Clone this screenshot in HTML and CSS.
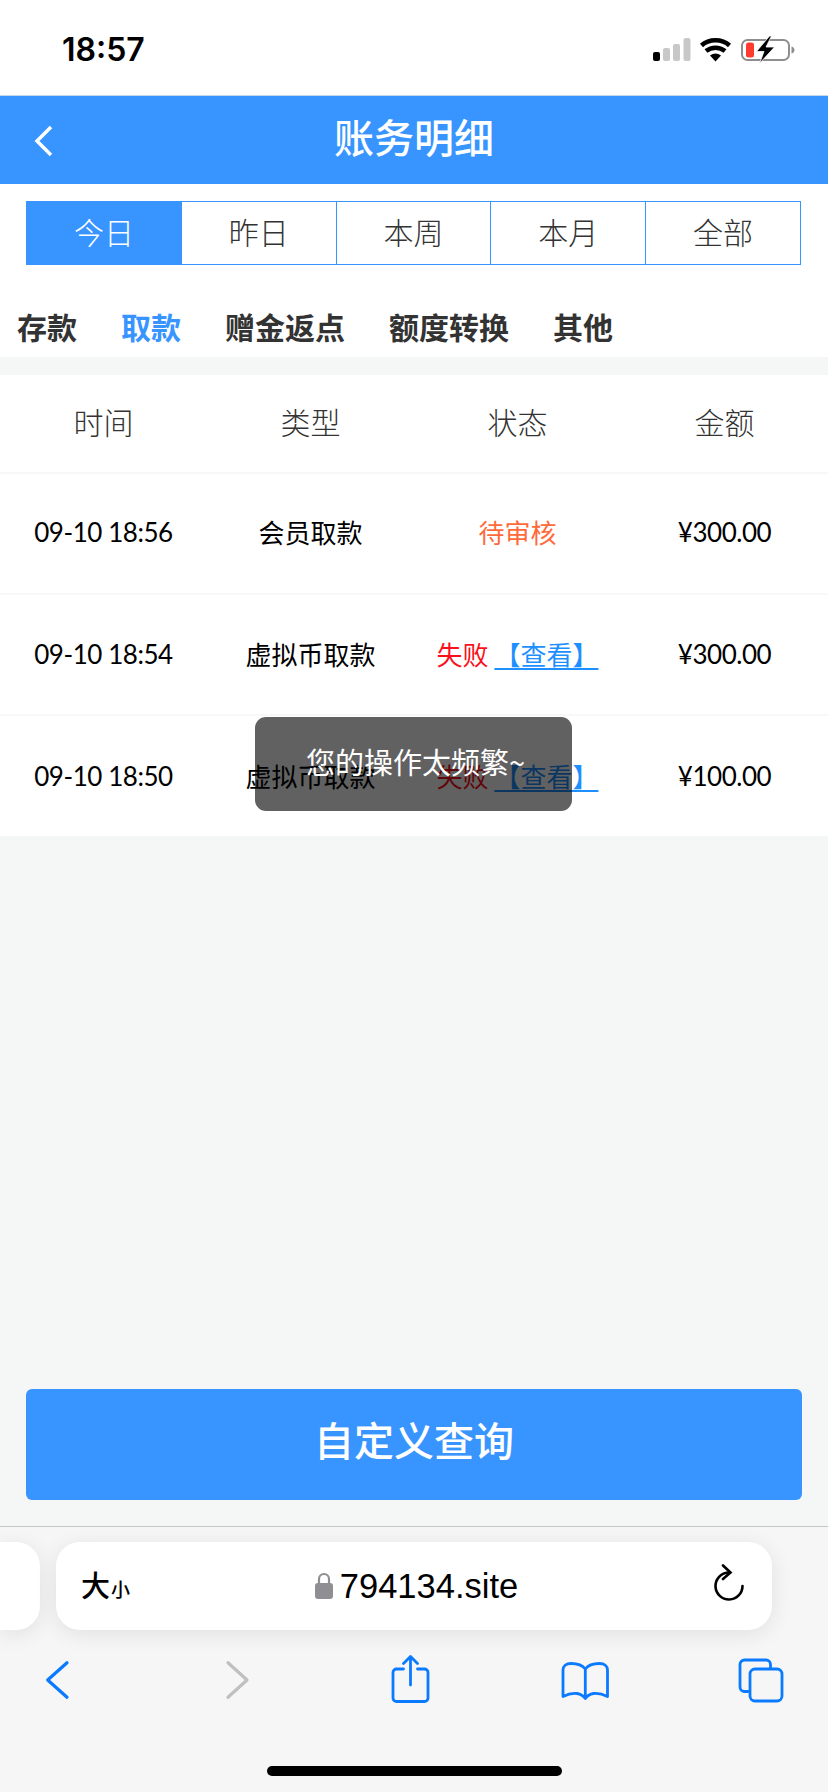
FILE: index.html
```html
<!DOCTYPE html>
<html lang="zh">
<head>
<meta charset="utf-8">
<title>账务明细</title>
<link rel="stylesheet" href="styles.css">
</head>
<body>
<div class="page">
  <div class="status">
    <span class="clock">18:57</span>
    <svg class="status-icons" width="142" height="28" viewBox="0 0 142 28">
      <rect x="0" y="16" width="7" height="9" rx="2" fill="#000"/>
      <rect x="10" y="12" width="7" height="13" rx="2" fill="#c8c8c8"/>
      <rect x="20" y="8" width="7" height="17" rx="2" fill="#c8c8c8"/>
      <rect x="30.500" y="2" width="7" height="23" rx="2" fill="#c8c8c8"/>
      <path d="M48.500 9.500C56 2.500 69 2.500 76.500 9.500M53 15C58.500 10.500 66.500 10.500 72 15" fill="none" stroke="#000" stroke-width="4.500"/>
      <path d="M57 19.500C60.500 16.800 64.500 16.800 68 19.500L62.500 25.500Z" fill="#000"/>
      <rect x="89" y="4" width="47" height="20" rx="5.500" fill="none" stroke="#8e8e8e" stroke-width="2"/>
      <path d="M138.500 10.500c2 .6 3 2 3 3.500s-1 3-3 3.500z" fill="#8e8e8e"/>
      <rect x="93" y="6.500" width="8" height="15" rx="2.500" fill="#ff3b30"/>
      <path d="M116.500 0 103.500 15.500h7.500l-4.500 12 15-16.500h-8.500l5.500-11z" fill="#000" stroke="#fff" stroke-width=".8"/>
    </svg>
  </div>

  <header class="topbar">
    <svg class="topbar-back" width="22" height="34" viewBox="0 0 22 34"><path d="M18 3 4 17l14 14" fill="none" stroke="#fff" stroke-width="3.500"/></svg>
    <h1 class="topbar-title">账务明细</h1>
  </header>

  <section class="filters">
    <div class="periods">
      <div class="period period-on">今日</div>
      <div class="period">昨日</div>
      <div class="period">本周</div>
      <div class="period">本月</div>
      <div class="period">全部</div>
    </div>
    <nav class="kinds">
      <span>存款</span>
      <span class="kind-on">取款</span>
      <span>赠金返点</span>
      <span>额度转换</span>
      <span>其他</span>
    </nav>
  </section>

  <section class="ledger">
    <div class="row row-head">
      <div>时间</div><div>类型</div><div>状态</div><div>金额</div>
    </div>
    <div class="row row-first">
      <div class="num">09-10 18:56</div><div>会员取款</div><div class="pending">待审核</div><div class="num">¥300.00</div>
    </div>
    <div class="row row-second">
      <div class="num">09-10 18:54</div><div>虚拟币取款</div><div><span class="failed">失败</span> <a class="view">【查看】</a></div><div class="num">¥300.00</div>
    </div>
    <div class="row row-last">
      <div class="num">09-10 18:50</div><div>虚拟币取款</div><div><span class="failed">失败</span> <a class="view">【查看】</a></div><div class="num">¥100.00</div>
    </div>
  </section>

  <div class="spacer"></div>
  <button class="query">自定义查询</button>

  <div class="browser">
    <div class="url-row">
      <div class="url-stub"></div>
      <div class="url-bar">
        <div class="aa"><span class="aa-big">大</span><span class="aa-small">小</span></div>
        <div class="url">
          <svg class="lock" width="18" height="27" viewBox="0 0 18 27"><path d="M4 12V7a5 5 0 0 1 10 0v5" fill="none" stroke="#8e8e93" stroke-width="2.200"/><rect x="0" y="11" width="18" height="16" rx="3" fill="#8e8e93"/></svg>
          <span>794134.site</span>
        </div>
        <svg class="reload" width="32" height="38" viewBox="0 0 32 38"><path d="M15 8.500A13.500 13.500 0 1 0 29.500 22" fill="none" stroke="#000" stroke-width="2.600" stroke-linecap="round"/><path d="M10 1.500 17.500 8.500 10 15" fill="none" stroke="#000" stroke-width="2.600" stroke-linecap="round"/></svg>
      </div>
    </div>
    <div class="tools">
      <svg width="50" height="50" viewBox="0 0 50 50"><path d="M35 7.700 15.700 25 35 42.300" fill="none" stroke="#0a7aff" stroke-width="3.200" stroke-linecap="round" stroke-linejoin="round"/></svg>
      <svg width="50" height="50" viewBox="0 0 50 50"><path d="M20 7.700 39 25 20 42.300" fill="none" stroke="#c0c0c0" stroke-width="3.200" stroke-linecap="round" stroke-linejoin="round"/></svg>
      <svg width="50" height="50" viewBox="0 0 50 50"><path d="M19.500 14H12.500A3.500 3.500 0 0 0 9 17.500V43a3.500 3.500 0 0 0 3.500 3.500H40.500A3.500 3.500 0 0 0 44 43V17.500A3.500 3.500 0 0 0 40.500 14H33.500M26.500 30V2M19.500 8.500 26.500 1.500 33.500 8.500" fill="none" stroke="#0a7aff" stroke-width="2.800" stroke-linecap="round" stroke-linejoin="round"/></svg>
      <svg width="50" height="50" viewBox="0 0 50 50"><path d="M26.300 14C23 9.500 18 8.500 12 8.500 7 8.500 4 11 4 15V41.500C9 39 14 38 18 38.500 22 39.200 24.500 41 26.300 43.500 28 41 30.500 39.200 34.500 38.500 38.500 38 43.500 39 48.500 41.500V15C48.500 11 45.500 8.500 40.500 8.500 34.500 8.500 29.500 9.500 26.300 14V43" fill="none" stroke="#0a7aff" stroke-width="2.800" stroke-linejoin="round" stroke-linecap="round"/></svg>
      <svg width="50" height="50" viewBox="0 0 50 50"><path d="M13 36.500H9A4.500 4.500 0 0 1 5 32V9.500A4.500 4.500 0 0 1 9.500 5H31A4.500 4.500 0 0 1 35.500 9.500V13" fill="none" stroke="#0a7aff" stroke-width="2.800" stroke-linecap="round"/><rect x="15" y="14" width="32" height="32" rx="5" fill="none" stroke="#0a7aff" stroke-width="2.800"/></svg>
    </div>
    <div class="home"></div>
  </div>

  <div class="toast">您的操作太频繁~</div>
</div>
</body>
</html>
```
FILE: styles.css
```css
* { box-sizing: border-box; }
html, body { margin: 0; padding: 0; }
body { font-family: "Noto Sans CJK SC", "Noto Sans", sans-serif; color: #000; }
.page { position: relative; width: 828px; height: 1792px; display: flex; flex-direction: column; background: #f5f7f7; overflow: hidden; }

.status { height: 96px; flex: none; background: #fff; border-bottom: 1px solid #c4d6ea; display: flex; align-items: flex-start; justify-content: space-between; padding: 31px 33px 0 62px; }
.clock { font-family: Inter, "Liberation Sans", sans-serif; font-weight: 600; font-size: 32px; line-height: 38px; }
.status-icons { margin: 5px 0 0; }

.topbar { height: 88px; flex: none; background: #3894ff; display: flex; align-items: center; justify-content: center; position: relative; }
.topbar-back { position: absolute; left: 33px; top: 28px; }
.topbar-title { margin: 0; color: #fff; font-size: 40px; font-weight: 500; line-height: 56px; position: relative; top: -4px; }

.filters { flex: none; background: #fff; padding: 17px 27px 0 26px; height: 173px; }
.periods { display: flex; height: 64px; }
.period { flex: 1; background: #fff; border: 1px solid #3894ff; border-left: none; font-size: 30px; font-weight: 300; line-height: 58px; text-align: center; color: #333; }
.period:first-child { border-left: 1px solid #3894ff; }
.period-on { background: #3894ff; color: #fff; }

.kinds { display: flex; gap: 44px; margin-left: -9px; padding-top: 40px; font-size: 30px; line-height: 42px; font-weight: 700; color: #333; white-space: nowrap; }
.kind-on { color: #3894ff; }

.ledger { flex: none; margin-top: 18px; background: #fff; }
.row { display: grid; grid-template-columns: repeat(4, 207px); align-items: center; height: 121px; text-align: center; font-size: 26px; line-height: 36px; border-bottom: 2px solid #f7f8f8; white-space: nowrap; }
.row-head { height: 99px; padding-bottom: 6px; font-size: 30px; font-weight: 300; color: #333; }
.row-first { padding-bottom: 4px; }
.row-second { padding-bottom: 1px; }
.row-last { height: 120px; border-bottom: none; }
.num { font-family: Lato, "Noto Sans", sans-serif; letter-spacing: -.45px; }
.pending { color: #ff6a3a; }
.failed { color: #fb0f1a; }
.view { color: #1e8fff; text-decoration: underline; text-underline-offset: 3px; }

.spacer { flex: 1; }
.query { flex: none; display: block; margin: 0 26px; width: 776px; height: 111px; border: none; border-radius: 6px; background: #3894ff; color: #fff; font-family: inherit; font-size: 40px; font-weight: 500; padding: 0 0 12px; }

.browser { flex: none; margin-top: 26px; height: 266px; background: #f6f6f7; border-top: 1px solid #c6c6c8; }
.url-row { display: flex; gap: 16px; padding-top: 15px; }
.url-stub { width: 40px; height: 88px; background: #fff; border-radius: 0 24px 24px 0; box-shadow: 0 4px 22px rgba(0,0,0,.09); }
.url-bar { width: 716px; height: 88px; background: #fff; border-radius: 24px; box-shadow: 0 4px 22px rgba(0,0,0,.09); display: grid; grid-template-columns: 1fr auto 1fr; align-items: center; padding: 0 27px 0 25px; }
.aa { display: flex; align-items: baseline; color: #000; font-weight: 500; line-height: 40px; }
.aa-big { font-size: 29px; }
.aa-small { font-size: 19px; margin-left: 1px; }
.url { display: flex; align-items: center; gap: 7px; font-family: "Liberation Sans", sans-serif; font-size: 34.500px; line-height: 40px; margin-left: 7px; }
.lock { position: relative; top: -1px; }
.reload { justify-self: end; position: relative; top: -3px; }
.tools { display: flex; justify-content: space-between; padding: 25px 43px 0 32px; height: 75px; }
.tools svg { display: block; }
.home { width: 295px; height: 10px; border-radius: 5px; background: #000; margin: 61px 0 0 267px; }

.toast { position: absolute; left: 255px; top: 717px; width: 317px; height: 94px; border-radius: 11px; background: rgba(0,0,0,.62); color: #fff; font-size: 29px; line-height: 40px; padding: 24px 0 0 51px; white-space: nowrap; }
```
